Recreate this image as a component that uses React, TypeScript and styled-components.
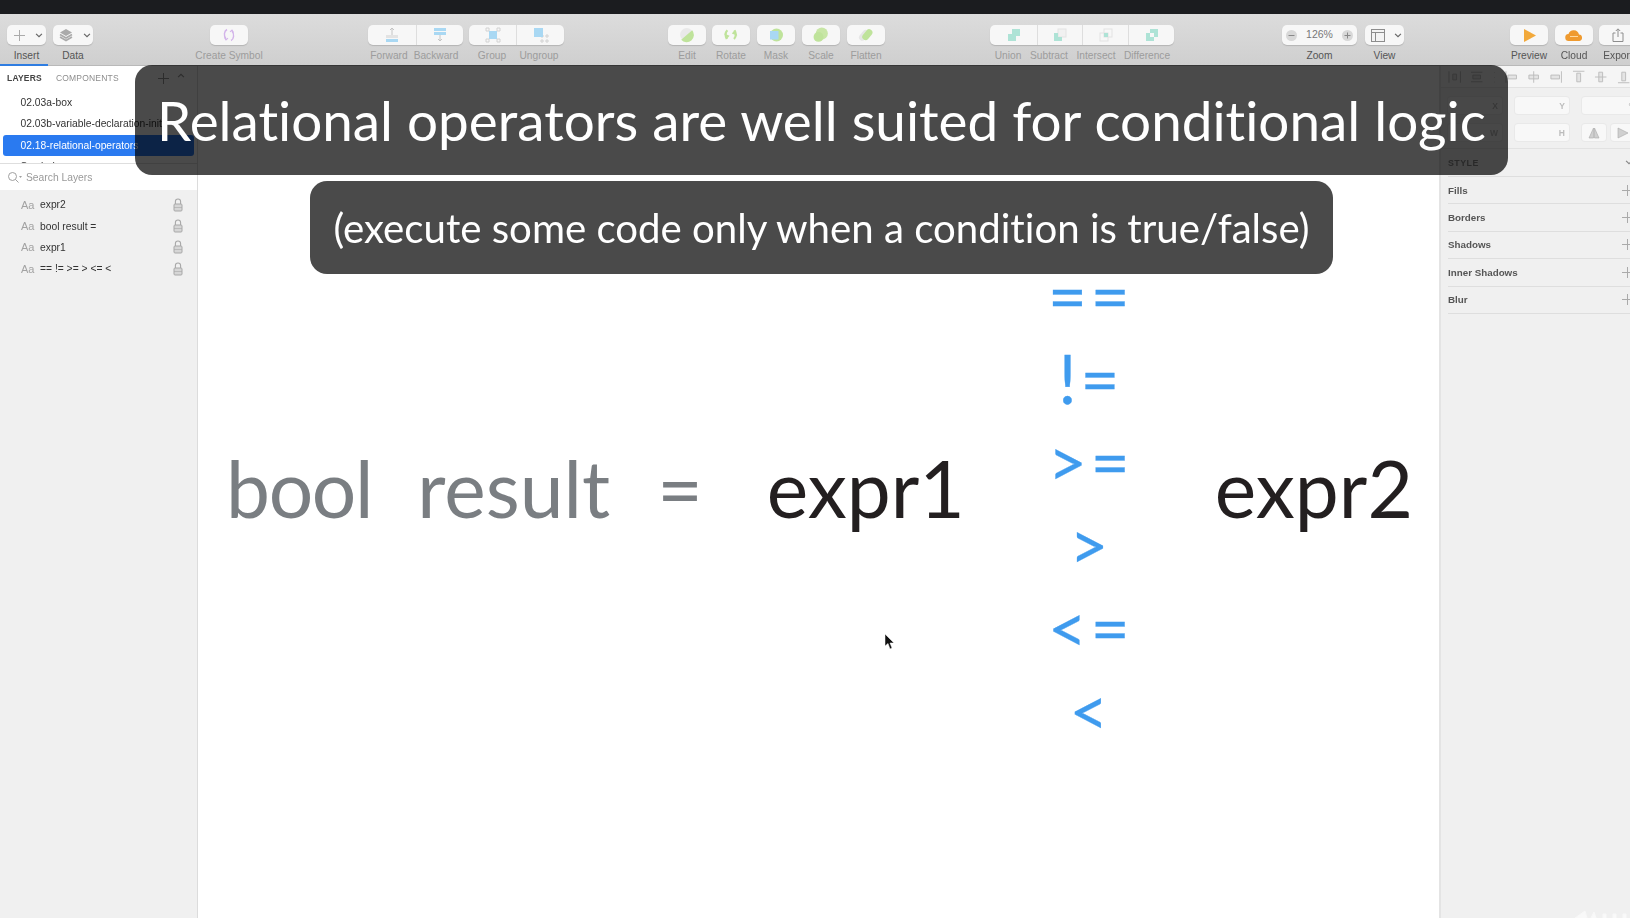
import React from "react";
import styled, { createGlobalStyle } from "styled-components";

const Global = createGlobalStyle`
  html, body { margin: 0; padding: 0; background: #fff; }
  body { width: 1630px; height: 918px; overflow: hidden; font-family: "Liberation Sans", Arial, sans-serif; }
`;

const Page = styled.div`
  position: relative;
  width: 1630px;
  height: 918px;
  display: flex;
  flex-direction: column;
  overflow: hidden;
`;
const TitleBar = styled.div`
  height: 14px;
  background: #1b1c1f;
  flex: none;
`;
const Toolbar = styled.div`
  height: 52px;
  flex: none;
  box-sizing: border-box;
  display: flex;
  align-items: flex-start;
  padding-top: 11px;
  background: linear-gradient(#dcdcdc, #cfcfcf);
  border-bottom: 1px solid #b9b9b9;
  filter: blur(0.45px);
`;
const Tool = styled.div<{ $w: number; $gap?: number }>`
  width: ${(p) => p.$w}px;
  margin-left: ${(p) => p.$gap ?? 0}px;
  flex: none;
  display: flex;
  flex-direction: column;
  align-items: center;
`;
const ToolRow = styled.div<{ $gap?: number }>`
  display: flex;
  flex: none;
  margin-left: ${(p) => p.$gap ?? 0}px;
  background: #f7f7f7;
  border-radius: 5px;
  height: 20px;
  box-shadow: 0 1px 1px #b4b4b4;
`;
const Segment = styled.div<{ $w: number; $divider?: boolean }>`
  width: ${(p) => p.$w}px;
  height: 20px;
  box-sizing: border-box;
  display: flex;
  align-items: center;
  justify-content: center;
  border-left: ${(p) => (p.$divider ? "1px solid #dedede" : "none")};
`;
const Button = styled.div<{ $gap?: number; $pad?: number }>`
  width: 100%;
  height: 20px;
  box-sizing: border-box;
  padding-left: ${(p) => p.$pad ?? 0}px;
  background: #f7f7f7;
  border-radius: 5px;
  box-shadow: 0 1px 1px #b4b4b4;
  display: flex;
  align-items: center;
  justify-content: center;
  gap: ${(p) => p.$gap ?? 10}px;
  flex: none;
`;
const ToolLabel = styled.div<{ $strong?: boolean }>`
  font-size: 10.2px;
  line-height: 12px;
  margin-top: 5px;
  color: ${(p) => (p.$strong ? "#555" : "#9c9c9c")};
  white-space: nowrap;
`;
const LabelRow = styled.div`
  display: flex;
  align-self: flex-start;
`;
const LabelCell = styled.div<{ $w: number }>`
  width: ${(p) => p.$w}px;
  display: flex;
  justify-content: center;
`;
const ZoomValue = styled.span`
  font-size: 10.5px;
  color: #777;
  margin: -2px 1px 0;
`;
const InsertMark = styled.div`
  position: absolute;
  left: 0;
  top: 64px;
  width: 48px;
  height: 2px;
  background: #2f7de1;
`;

const Body = styled.div`
  flex: 1;
  display: flex;
  min-height: 0;
`;
const LeftPanel = styled.aside`
  width: 198px;
  flex: none;
  box-sizing: border-box;
  background: #f0f0f0;
  border-right: 1px solid #dcdcdc;
  display: flex;
  flex-direction: column;
  filter: blur(0.4px);
`;
const Pages = styled.div`
  height: 98px;
  flex: none;
  background: #fff;
  overflow: hidden;
  border-bottom: 1px solid #dedede;
  box-sizing: border-box;
`;
const Tabs = styled.div`
  height: 24px;
  margin-bottom: 2px;
  display: flex;
  align-items: center;
  gap: 14px;
  padding: 0 7px;
  font-size: 8.5px;
  letter-spacing: 0.2px;
`;
const TabText = styled.span<{ $active?: boolean }>`
  color: ${(p) => (p.$active ? "#444" : "#8d8d8d")};
  font-weight: ${(p) => (p.$active ? 700 : 400)};
`;
const TabIcons = styled.div`
  margin-left: auto;
  display: flex;
  gap: 8px;
  margin-right: 5px;
`;
const PageRow = styled.div<{ $selected?: boolean }>`
  height: 21.4px;
  margin: 0 3px;
  padding-left: 17.5px;
  border-radius: 3px;
  font-size: 10.3px;
  line-height: 21.4px;
  white-space: nowrap;
  overflow: hidden;
  color: ${(p) => (p.$selected ? "#fff" : "#333")};
  background: ${(p) => (p.$selected ? "#2a7af0" : "transparent")};
`;
const SearchRow = styled.div`
  height: 26px;
  flex: none;
  background: #fff;
  display: flex;
  align-items: center;
  gap: 4px;
  padding-left: 7px;
  font-size: 10.3px;
  color: #9a9a9a;
`;
const LayerList = styled.div`
  padding-top: 4px;
`;
const LayerRow = styled.div`
  height: 21.4px;
  display: flex;
  align-items: center;
  padding-left: 21px;
  font-size: 10.3px;
  color: #333;
`;
const Aa = styled.span`
  width: 19px;
  flex: none;
  font-size: 11px;
  color: #a2a2a2;
`;
const LayerName = styled.span`
  flex: 1;
`;
const LockWrap = styled.span`
  width: 24px;
  flex: none;
  display: flex;
`;

const Canvas = styled.main`
  flex: 1;
  background: #fff;
  display: flex;
  align-items: flex-start;
  font-family: Lato, sans-serif;
  font-variant-ligatures: none;
  padding: 188px 0 0 28px;
  min-width: 0;
  filter: blur(0.3px);
`;
const Word = styled.span<{ $dark?: boolean; $gap: number; $tight?: boolean }>`
  font-size: 78.5px;
  line-height: 94px;
  flex: none;
  margin-left: ${(p) => p.$gap}px;
  margin-top: 187px;
  letter-spacing: ${(p) => (p.$tight ? "-1.3px" : "0")};
  color: ${(p) => (p.$dark ? "#231f20" : "#7a7e82")};
  white-space: pre;
`;
const Operators = styled.div`
  width: 160px;
  margin-left: 46px;
  flex: none;
  display: flex;
  flex-direction: column;
  align-items: center;
  font-size: 67px;
  line-height: 83px;
  color: #3f9bee;
  -webkit-text-stroke: 0.3px #3f9bee;
`;
const Operator = styled.div`
  height: 83px;
  white-space: pre;
  letter-spacing: 4px;
`;

const RightPanel = styled.aside`
  width: 191px;
  flex: none;
  box-sizing: border-box;
  background: #f0f0f0;
  border-left: 2px solid #e4e4e4;
  padding-left: 7px;
  filter: blur(0.4px);
  overflow: hidden;
`;
const AlignRow = styled.div`
  height: 22px;
  box-sizing: border-box;
  display: flex;
  align-items: center;
  gap: 9px;
  margin-left: -7px;
  padding-left: 7px;
  border-bottom: 1px solid #e2e2e2;
  background: #f5f5f5;
`;
const Fields = styled.div`
  height: 61px;
  box-sizing: border-box;
  padding: 9px 0 0 7px;
  display: flex;
  flex-direction: column;
  gap: 10px;
  margin-left: -7px;
  border-bottom: 1px solid #e2e2e2;
`;
const FieldRow = styled.div`
  display: flex;
  gap: 13px;
`;
const FieldButtons = styled.div`
  display: flex;
  gap: 5px;
`;
const Field = styled.div<{ $w?: number; $center?: boolean }>`
  width: ${(p) => p.$w ?? 54}px;
  height: 17px;
  box-sizing: border-box;
  flex: none;
  background: #f8f8f8;
  border-radius: 3px;
  box-shadow: 0 0 0 1px #e9e9e9;
  font-size: 8.5px;
  font-weight: 700;
  color: #bcbcbc;
  display: flex;
  align-items: center;
  justify-content: ${(p) => (p.$center ? "center" : "flex-end")};
  padding-right: ${(p) => (p.$center ? 0 : 4)}px;
`;
const StyleHead = styled.div`
  height: 28px;
  box-sizing: border-box;
  display: flex;
  align-items: center;
  justify-content: space-between;
  font-size: 8.8px;
  font-weight: 700;
  letter-spacing: 0.5px;
  color: #8b8b8b;
  border-bottom: 1px solid #dedede;
  svg { margin-right: -3px; }
`;
const Section = styled.div`
  height: 27.4px;
  box-sizing: border-box;
  display: flex;
  align-items: center;
  justify-content: space-between;
  font-size: 9.8px;
  font-weight: 700;
  color: #555;
  border-bottom: 1px solid #dedede;
  svg { margin-right: -3px; }
`;

const Overlay = styled.div<{ $left: number; $top: number; $w: number; $h: number; $size: number }>`
  position: absolute;
  left: ${(p) => p.$left}px;
  top: ${(p) => p.$top}px;
  width: ${(p) => p.$w}px;
  height: ${(p) => p.$h}px;
  border-radius: 17px;
  background: rgba(0, 0, 0, 0.71);
  color: #fff;
  font-family: Lato, sans-serif;
  font-variant-ligatures: none;
  font-size: ${(p) => p.$size}px;
  display: flex;
  align-items: center;
  justify-content: center;
  white-space: nowrap;
  filter: blur(0.3px);
`;
const Cursor = styled.svg`
  position: absolute;
  left: 884px;
  top: 634px;
`;
const Watermark = styled.svg`
  position: absolute;
  right: 0;
  bottom: 0;
`;

const Chevron = ({ up, c = "#666" }: { up?: boolean; c?: string }) => (
  <svg width="8" height="5" viewBox="0 0 9 6">
    <path d={up ? "M1 5l3.5-3.5L8 5" : "M1 1l3.5 3.5L8 1"} fill="none" stroke={c} strokeWidth="1.4" />
  </svg>
);
const Plus = ({ c = "#aaa", s = 11 }: { c?: string; s?: number }) => (
  <svg width={s} height={s} viewBox="0 0 11 11">
    <path d="M5.5 0v11M0 5.5h11" stroke={c} strokeWidth="1" />
  </svg>
);
const Ico = ({ w = 18, h = 16, k = 1, children }: { w?: number; h?: number; k?: number; children: React.ReactNode }) => (
  <svg width={w * k} height={h * k} viewBox={`0 0 ${w} ${h}`}>
    {children}
  </svg>
);
const Lock = () => (
  <svg width="10" height="14" viewBox="0 0 10 14">
    <path d="M2.4 6V3.6a2.6 2.6 0 0 1 5.2 0V6" fill="none" stroke="#a8a8a8" strokeWidth="1.1" />
    <rect x="1" y="6" width="8" height="7" rx="1" fill="#d6d6d6" stroke="#a8a8a8" />
    <path d="M1 9.5h8" stroke="#a8a8a8" strokeWidth=".6" />
  </svg>
);
const Alg = ({ d, w = 14 }: { d: string; w?: number }) => (
  <svg width={w} height="14" viewBox={`0 0 ${w} 14`}>
    <path d={d} fill="#e4e4e4" stroke="#bdbdbd" strokeWidth="1" />
  </svg>
);

const pages = ["02.03a-box", "02.03b-variable-declaration-init-", "02.18-relational-operators", "Symbols"];
const layers = ["expr2", "bool result =", "expr1", "== != >= > <= <"];
const sections = ["Fills", "Borders", "Shadows", "Inner Shadows", "Blur"];
const operators = ["==", "!=", ">=", ">", "<=", "<"];

const green = "#bfe39b";
const teal = "#aee3d6";
const blue = "#a9d8f3";
const corner = "#d2d2d2";

export default function App() {
  return (
    <Page>
      <Global />
      <TitleBar />
      <Toolbar>
        <Tool $w={39} $gap={7}>
          <Button $pad={4}>
            <Plus />
            <Chevron />
          </Button>
          <ToolLabel $strong>Insert</ToolLabel>
        </Tool>
        <Tool $w={40} $gap={7}>
          <Button $pad={3}>
            <Ico w={14} h={14}>
              <path d="M7 1l6 3.5L7 8 1 4.5z" fill="#aaa" />
              <path d="M1 6.5L7 10l6-3.5M1 9l6 3.5L13 9" fill="none" stroke="#aaa" strokeWidth="1.6" />
            </Ico>
            <Chevron />
          </Button>
          <ToolLabel $strong>Data</ToolLabel>
        </Tool>
        <Tool $w={38} $gap={117}>
          <Button>
            <Ico w={14} h={14}>
              <path d="M5 1.5C2 3 1.5 8 4 11M9 12.5c3-1.500 3.500-6.500 1-9.500" fill="none" stroke="#d3b4ea" strokeWidth="1.4" />
              <path d="M2.500 9.500l1.500 2.500 2-1.800M11.500 4.500l-1.500-2.500-2 1.800" fill="none" stroke="#d3b4ea" strokeWidth="1.1" />
            </Ico>
          </Button>
          <ToolLabel>Create Symbol</ToolLabel>
        </Tool>
        <Tool $w={95} $gap={120}>
          <ToolRow>
            <Segment $w={48}>
              <Ico w={14} h={16}>
                <path d="M7 1v7M5 3l2-2 2 2" fill="none" stroke="#c4c4c4" />
                <rect x="1" y="8" width="12" height="3" fill="#e3e3e3" />
                <rect x="1" y="12" width="12" height="3" fill={blue} />
              </Ico>
            </Segment>
            <Segment $w={47} $divider>
              <Ico w={14} h={16}>
                <rect x="1" y="1" width="12" height="3" fill={blue} />
                <rect x="1" y="5" width="12" height="3" fill={blue} />
                <path d="M7 8v6M5 12l2 2 2-2" fill="none" stroke="#c4c4c4" />
              </Ico>
            </Segment>
          </ToolRow>
          <LabelRow>
            <LabelCell $w={42}><ToolLabel>Forward</ToolLabel></LabelCell>
            <LabelCell $w={52}><ToolLabel>Backward</ToolLabel></LabelCell>
          </LabelRow>
        </Tool>
        <Tool $w={95} $gap={6}>
          <ToolRow>
            <Segment $w={47}>
              <Ico w={16} h={16}>
                <path d="M1 1h3v3H1zM12 1h3v3h-3zM1 12h3v3H1zM12 12h3v3h-3z" fill="none" stroke={corner} />
                <rect x="4" y="4" width="8" height="8" fill={blue} />
              </Ico>
            </Segment>
            <Segment $w={48} $divider>
              <Ico w={16} h={16}>
                <path d="M8 8h2v2H8zM13 8h2v2h-2zM8 13h2v2H8zM13 13h2v2h-2z" fill="none" stroke={corner} />
                <rect x="1" y="1" width="9" height="9" fill={blue} />
              </Ico>
            </Segment>
          </ToolRow>
          <LabelRow>
            <LabelCell $w={46}><ToolLabel>Group</ToolLabel></LabelCell>
            <LabelCell $w={48}><ToolLabel>Ungroup</ToolLabel></LabelCell>
          </LabelRow>
        </Tool>
        <Tool $w={38} $gap={104}>
          <Button>
            <Ico w={14} h={14} k={1.1}>
              <circle cx="7" cy="7" r="6" fill="#e9e9e9" />
              <path d="M2 11.500L12 3a6 6 0 0 1-10 8.500z" fill={green} />
            </Ico>
          </Button>
          <ToolLabel>Edit</ToolLabel>
        </Tool>
        <Tool $w={38} $gap={6}>
          <Button>
            <Ico w={14} h={14} k={1.1}>
              <path d="M4 3C2 5 2 8 3.500 11M10 11c2-2 2-5 .5-8" fill="none" stroke={green} strokeWidth="2" />
              <path d="M1 6l2.500 5L6 8M13 8l-2.500-5L8 6" fill={green} />
            </Ico>
          </Button>
          <ToolLabel>Rotate</ToolLabel>
        </Tool>
        <Tool $w={38} $gap={7}>
          <Button>
            <Ico w={16} h={16}>
              <circle cx="8.500" cy="8" r="6.500" fill={green} />
              <rect x="2" y="4" width="8.500" height="8.500" fill={blue} />
            </Ico>
          </Button>
          <ToolLabel>Mask</ToolLabel>
        </Tool>
        <Tool $w={38} $gap={7}>
          <Button>
            <Ico w={14} h={14} k={1.1}>
              <circle cx="8" cy="6" r="5.500" fill="#c8e6a6" />
              <circle cx="5" cy="9" r="4.500" fill={green} />
            </Ico>
          </Button>
          <ToolLabel>Scale</ToolLabel>
        </Tool>
        <Tool $w={38} $gap={7}>
          <Button>
            <Ico w={14} h={14} k={1.1}>
              <rect x="2.500" y="2" width="6" height="11" rx="3" transform="rotate(40 5.500 7.500)" fill="#e6e6e6" />
              <rect x="5.500" y="1.500" width="6" height="11" rx="3" transform="rotate(40 8.500 7)" fill={green} />
            </Ico>
          </Button>
          <ToolLabel>Flatten</ToolLabel>
        </Tool>
        <Tool $w={184} $gap={105}>
          <ToolRow>
            <Segment $w={47}>
              <Ico w={14} h={14}>
                <path d="M5 1h8v7H9v5H1V6h4z" fill={teal} />
              </Ico>
            </Segment>
            <Segment $w={45} $divider>
              <Ico w={14} h={14}>
                <rect x="5" y="1" width="8" height="8" fill="#f1f1f1" stroke="#e3e3e3" />
                <path d="M1 5h4v4h4v4H1z" fill={teal} />
              </Ico>
            </Segment>
            <Segment $w={46} $divider>
              <Ico w={14} h={14}>
                <rect x="5" y="1" width="8" height="8" fill="none" stroke="#e3e3e3" />
                <rect x="1" y="5" width="8" height="8" fill="none" stroke="#e3e3e3" />
                <rect x="5" y="5" width="4" height="4" fill={teal} />
              </Ico>
            </Segment>
            <Segment $w={46} $divider>
              <Ico w={14} h={14}>
                <path d="M5 1h8v8H9V5H5zM1 5h4v4h4v4H1z" fill={teal} />
              </Ico>
            </Segment>
          </ToolRow>
          <LabelRow>
            <LabelCell $w={36}><ToolLabel>Union</ToolLabel></LabelCell>
            <LabelCell $w={46}><ToolLabel>Subtract</ToolLabel></LabelCell>
            <LabelCell $w={48}><ToolLabel>Intersect</ToolLabel></LabelCell>
            <LabelCell $w={54}><ToolLabel>Difference</ToolLabel></LabelCell>
          </LabelRow>
        </Tool>
        <Tool $w={75} $gap={108}>
          <Button $gap={8}>
            <Ico w={11} h={11}>
              <circle cx="5.500" cy="5.500" r="5.500" fill="#d8d8d8" />
              <path d="M2.500 5.500h6" stroke="#888" />
            </Ico>
            <ZoomValue>126%</ZoomValue>
            <Ico w={11} h={11}>
              <circle cx="5.500" cy="5.500" r="5.500" fill="#d8d8d8" />
              <path d="M2.500 5.500h6M5.500 2.500v6" stroke="#888" />
            </Ico>
          </Button>
          <ToolLabel $strong>Zoom</ToolLabel>
        </Tool>
        <Tool $w={39} $gap={8}>
          <Button $gap={9} $pad={3}>
            <Ico w={14} h={13}>
              <rect x=".5" y=".5" width="13" height="12" fill="#f4f4f4" stroke="#8d8d8d" />
              <path d="M.5 3.500h13M4.500 3.500v9" stroke="#8d8d8d" fill="none" />
            </Ico>
            <Chevron />
          </Button>
          <ToolLabel $strong>View</ToolLabel>
        </Tool>
        <Tool $w={38} $gap={106}>
          <Button>
            <Ico w={13} h={13}>
              <path d="M1 0l12 6.500L1 13z" fill="#f2a93b" />
            </Ico>
          </Button>
          <ToolLabel $strong>Preview</ToolLabel>
        </Tool>
        <Tool $w={38} $gap={7}>
          <Button>
            <Ico w={18} h={13}>
              <path d="M4 12a3.500 3.500 0 0 1-.5-7A5.500 5.500 0 0 1 14 5.500 3.300 3.300 0 0 1 14.500 12z" fill="#ef9a2f" />
              <path d="M5 7.500h8" stroke="#ffd9a0" />
            </Ico>
          </Button>
          <ToolLabel $strong>Cloud</ToolLabel>
        </Tool>
        <Tool $w={38} $gap={6}>
          <Button>
            <Ico w={12} h={14}>
              <path d="M3.500 5H1v8.500h10V5H8.500M6 9V1M3.800 3L6 .8 8.200 3" fill="none" stroke="#8d8d8d" />
            </Ico>
          </Button>
          <ToolLabel $strong>Export</ToolLabel>
        </Tool>
      </Toolbar>
      <InsertMark />
      <Body>
        <LeftPanel>
          <Pages>
            <Tabs>
              <TabText $active>LAYERS</TabText>
              <TabText>COMPONENTS</TabText>
              <TabIcons>
                <Plus c="#999" />
                <Chevron up c="#999" />
              </TabIcons>
            </Tabs>
            {pages.map((p, i) => (
              <PageRow key={p} $selected={i === 2}>{p}</PageRow>
            ))}
          </Pages>
          <SearchRow>
            <Ico w={15} h={13}>
              <circle cx="5.500" cy="5.500" r="4" fill="none" stroke="#a0a0a0" />
              <path d="M8.500 8.500l3 3" stroke="#a0a0a0" />
              <path d="M12 5h3l-1.500 2z" fill="#a0a0a0" />
            </Ico>
            <span>Search Layers</span>
          </SearchRow>
          <LayerList>
            {layers.map((l) => (
              <LayerRow key={l}>
                <Aa>Aa</Aa>
                <LayerName>{l}</LayerName>
                <LockWrap><Lock /></LockWrap>
              </LayerRow>
            ))}
          </LayerList>
        </LeftPanel>
        <Canvas>
          <Word $gap={0} $tight>bool</Word>
          <Word $gap={45}>result</Word>
          <Word $gap={47}>=</Word>
          <Word $dark $gap={64}>expr1</Word>
          <Operators>
            {operators.map((o) => (
              <Operator key={o}>{o}</Operator>
            ))}
          </Operators>
          <Word $dark $gap={44}>expr2</Word>
        </Canvas>
        <RightPanel>
          <AlignRow>
            <Alg d="M1 1v12M13 1v12M5 4h4v6H5z" />
            <Alg d="M1 2h12M1 12h12M3 5h8v4H3z" />
            <Alg w={3} d="M1.500 2v.5M1.500 7v.5M1.500 12v.5" />
            <Alg d="M1 1v12M3 5h9v4H3z" />
            <Alg d="M7 1v12M2 5h10v4H2z" />
            <Alg d="M13 1v12M2 5h9v4H2z" />
            <Alg d="M1 1h12M5 3h4v9H5z" />
            <Alg d="M1 7h12M5 2h4v10H5z" />
            <Alg d="M1 13h12M5 2h4v9H5z" />
          </AlignRow>
          <Fields>
            <FieldRow>
              <Field>X</Field>
              <Field>Y</Field>
              <Field>°</Field>
            </FieldRow>
            <FieldRow>
              <Field>W</Field>
              <Field>H</Field>
              <FieldButtons>
                <Field $w={24} $center>
                  <Ico w={12} h={12}>
                    <path d="M5.500 1L1 11h4.500zM6.500 1L11 11H6.500z" fill="#d0d0d0" stroke="#aaa" strokeWidth=".6" />
                  </Ico>
                </Field>
                <Field $w={24} $center>
                  <Ico w={12} h={12}>
                    <path d="M1 1l10 5-10 5z" fill="#d0d0d0" stroke="#aaa" strokeWidth=".6" />
                  </Ico>
                </Field>
              </FieldButtons>
            </FieldRow>
          </Fields>
          <StyleHead>
            <span>STYLE</span>
            <Chevron c="#888" />
          </StyleHead>
          {sections.map((s) => (
            <Section key={s}>
              <span>{s}</span>
              <Plus c="#aaa" />
            </Section>
          ))}
        </RightPanel>
      </Body>
      <Overlay $left={135} $top={65} $w={1373} $h={110} $size={54.8}>
        Relational operators are well suited for conditional logic
      </Overlay>
      <Overlay $left={310} $top={181} $w={1023} $h={93} $size={40.2}>
        (execute some code only when a condition is true/false)
      </Overlay>
      <Cursor width="10" height="16" viewBox="0 0 10 16">
        <path d="M1 0v12l3-2.500L6 15l2-1-2-5h4z" fill="#111" stroke="#fff" strokeWidth=".5" />
      </Cursor>
      <Watermark width="57" height="8" viewBox="0 0 57 8">
        <path d="M2 8L12 1l2 7M18 8l3-6 2 6M30 8V4h3v4M40 8V4h3v4M50 8V4h3v4" fill="#f9f9f9" stroke="#f8f8f8" />
      </Watermark>
    </Page>
  );
}
